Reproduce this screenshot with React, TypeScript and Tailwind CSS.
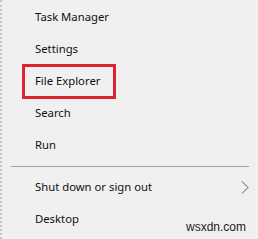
const items = ['Task Manager', 'Settings', 'File Explorer', 'Search', 'Run']
const bottomItems = ['Shut down or sign out', 'Desktop']

function MenuItem({ label, arrow }: { label: string; arrow?: boolean }) {
  return (
    <div className="flex h-8 items-center justify-between pl-[33px] pr-[9px]">
      <span className="text-[11.3px] text-[#111]">{label}</span>
      {arrow && (
        <svg width="8" height="13" viewBox="0 0 8 13" className="text-[#555a66]">
          <path d="M1 0.5 L7 6.5 L1 12.5" fill="none" stroke="currentColor" strokeWidth="1" />
        </svg>
      )}
    </div>
  )
}

export default function App() {
  return (
    <div
      className="relative h-[239px] w-[258px] overflow-hidden border-l-2 border-dotted border-l-[#c4c4c4] bg-[#f0f0f0] pt-px"
      style={{ fontFamily: '"Noto Sans", "Open Sans", sans-serif' }}
    >
      {items.map((label) => (
        <MenuItem key={label} label={label} />
      ))}
      <div className="flex h-[10px] items-center pl-[9px] pr-[9px]">
        <div className="h-px w-full bg-[#a3a3a3]" />
      </div>
      {bottomItems.map((label, i) => (
        <MenuItem key={label} label={label} arrow={i === 0} />
      ))}

      {/* highlight box */}
      <div className="absolute left-[20px] top-[64px] h-[35px] w-[94px] border-[3px] border-[#dc2331]" />

      <span
        className="absolute bottom-[3px] right-[12px] text-[12px] text-[#222]"
        style={{ fontFamily: '"Liberation Sans", Arial, sans-serif' }}
      >
        wsxdn.com
      </span>
    </div>
  )
}
